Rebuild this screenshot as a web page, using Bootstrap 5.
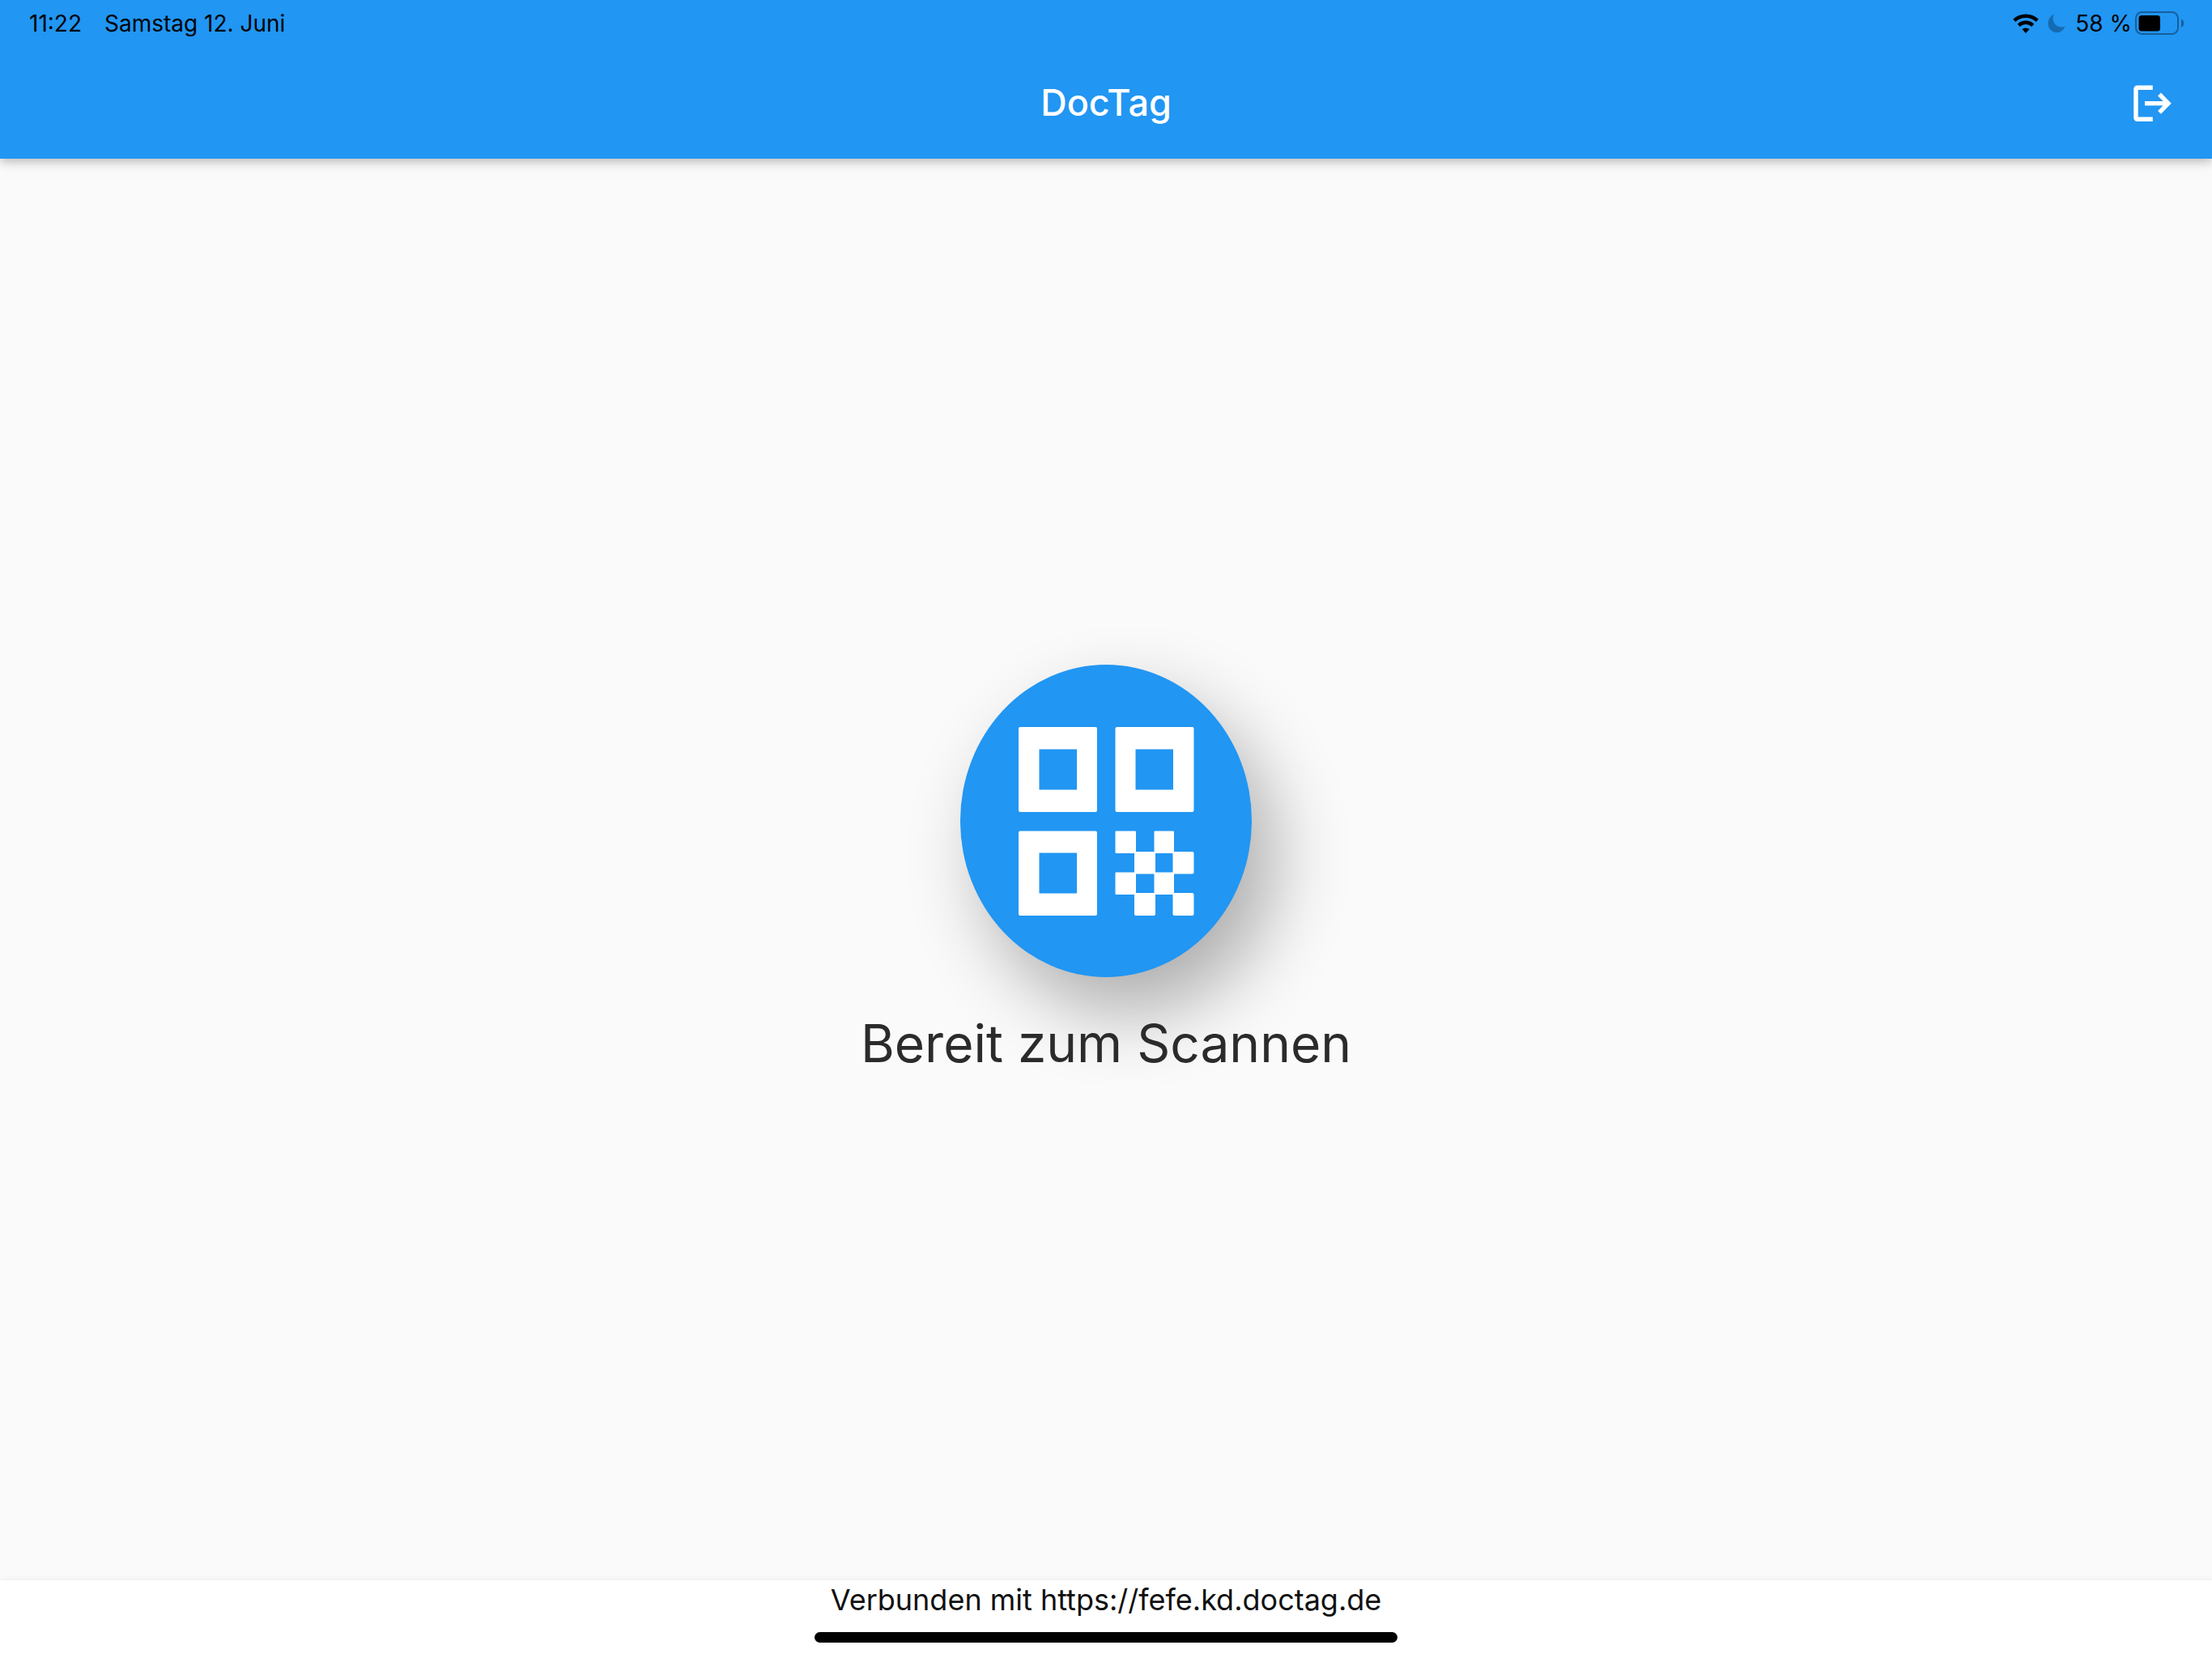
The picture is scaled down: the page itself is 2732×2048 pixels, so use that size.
<!DOCTYPE html>
<html lang="de">
<head>
<meta charset="utf-8">
<meta name="viewport" content="width=device-width, initial-scale=1">
<title>DocTag</title>
<link rel="stylesheet" href="https://cdn.jsdelivr.net/npm/bootstrap@5.3.0/dist/css/bootstrap.min.css">
<style>
  body { font-family: Inter, "Liberation Sans", sans-serif; background: #fafafa; color: #2b2b2b; }
  .app-header { background: #2196f3; box-shadow: 0 4px 12px rgba(0, 0, 0, .26); z-index: 1; }
  .status-bar { height: 58px; padding: 0 33px 0 36px; font-size: 28px; line-height: 32px; color: #000; }
  .status-left { gap: 28px; }
  .status-icons { gap: 10px; margin-right: 12px; }
  .title-bar { height: 138px; padding: 0 50px; }
  .app-title { font-size: 45px; line-height: 56px; font-weight: 500; color: #fff; }
  .scan-area { gap: 44px; }
  .scan-btn { width: 360px; height: 386px; background: #2196f3; border-radius: 50%; box-shadow: 28px 44px 92px rgba(0, 0, 0, .31); }
  .scan-label { font-size: 64px; line-height: 76px; }
  .app-footer { height: 96px; background: #fff; box-shadow: 0 -1px 6px rgba(0, 0, 0, .06); color: #111; }
  .connection { font-size: 36px; line-height: 48px; }
  .home-bar { width: 720px; height: 13px; background: #000; }
</style>
<script src="https://cdn.jsdelivr.net/npm/bootstrap@5.3.0/dist/js/bootstrap.bundle.min.js"></script>
</head>
<body class="d-flex flex-column min-vh-100">
<header class="app-header position-relative">
  <div class="status-bar d-flex justify-content-between align-items-center">
    <div class="status-left d-flex"><span>11:22</span><span>Samstag 12. Juni</span></div>
    <div class="d-flex align-items-center">
      <div class="status-icons d-flex align-items-center">
        <svg width="34" height="26" viewBox="0 0 34 26" fill="none" stroke="#000" stroke-width="4.4" aria-label="WLAN">
          <path d="M2.8 9.4a20.5 20.5 0 0 1 28.4 0"/><path d="M8.3 15.3a12.6 12.6 0 0 1 17.4 0"/>
          <path d="M12.4 20.1a7 7 0 0 1 9.2 0L17 25z" fill="#000" stroke="none"/>
        </svg>
        <svg width="22" height="24" viewBox="0 0 22 24" aria-label="Nicht stören"><path d="M7.5.8A12 12 0 0 0 6.600 5.400C6.600 11.800 11 16.400 17 16.400c1.700 0 3-.3 4.500-.9C20 20 16 23.200 11.300 23.200 5.200 23.200.6 18.600.6 12.300.6 7 3.300 2.800 7.500.8z" fill="#166bb0"/></svg>
      </div>
      <span class="me-1">58 %</span>
      <svg width="62" height="30" viewBox="0 0 62 30" aria-label="Akku">
        <rect x="1" y="1" width="52" height="27" rx="7.500" fill="none" stroke="#155f9b" stroke-width="2"/>
        <rect x="4.500" y="5" width="26.500" height="19.500" rx="3.500"/>
        <path d="M57 9.500c4.300 2 4.300 8.500 0 10.500z" fill="#155f9b"/>
      </svg>
    </div>
  </div>
  <div class="title-bar d-flex align-items-center">
    <div class="col"></div>
    <h1 class="app-title m-0">DocTag</h1>
    <div class="col d-flex justify-content-end">
      <button type="button" class="btn p-0 border-0 d-flex" aria-label="Abmelden">
        <svg width="48" height="48" viewBox="0 0 48 48" fill="none" stroke="#fff" stroke-width="5.400">
          <path d="M24.800 5.200H6q-2 0-2 2v35q0 2 2 2h18.800"/><path d="M15 24.700h30"/><path d="M33 13.500 44 24.700 33 35.900"/>
        </svg>
      </button>
    </div>
  </div>
</header>
<main class="scan-area flex-grow-1 d-flex flex-column align-items-center justify-content-center">
  <button type="button" class="scan-btn btn border-0 p-0 d-flex align-items-center justify-content-center" aria-labelledby="scan-label">
    <svg width="217" height="233" viewBox="0 0 217 233" fill="#fff">
      <path fill-rule="evenodd" d="M2 0H95q2 0 2 2V103q0 2-2 2H2q-2 0-2-2V2q0-2 2-2zM25.500 27.500V77.500H72V27.500z"/>
      <path fill-rule="evenodd" d="M121.500 0H214.500q2 0 2 2V103q0 2-2 2H121.500q-2 0-2-2V2q0-2 2-2zM144.500 27.500V77.500H191V27.500z"/>
      <path fill-rule="evenodd" d="M2 128.500H95q2 0 2 2V231q0 2-2 2H2q-2 0-2-2V130.500q0-2 2-2zM25.500 155.500V205.500H72V155.500z"/>
      <rect x="119.500" y="128.500" width="25.500" height="27.500" rx="1"/><rect x="167.500" y="128.500" width="24.500" height="27.500" rx="1"/>
      <rect x="143" y="154" width="26" height="27.500" rx="1"/><rect x="190.500" y="154" width="26" height="27.500" rx="2"/>
      <rect x="119.500" y="179.500" width="25.500" height="27.500" rx="1"/><rect x="167.500" y="179.500" width="24.500" height="27.500" rx="1"/>
      <rect x="143" y="205" width="26" height="28" rx="2"/><rect x="190.500" y="205" width="26" height="28" rx="2"/>
    </svg>
  </button>
  <div id="scan-label" class="scan-label position-relative">Bereit zum Scannen</div>
</main>
<footer class="app-footer d-flex flex-column align-items-center">
  <div class="connection">Verbunden mit https://fefe.kd.doctag.de</div>
  <div class="home-bar rounded-pill mt-3"></div>
</footer>
</body>
</html>
